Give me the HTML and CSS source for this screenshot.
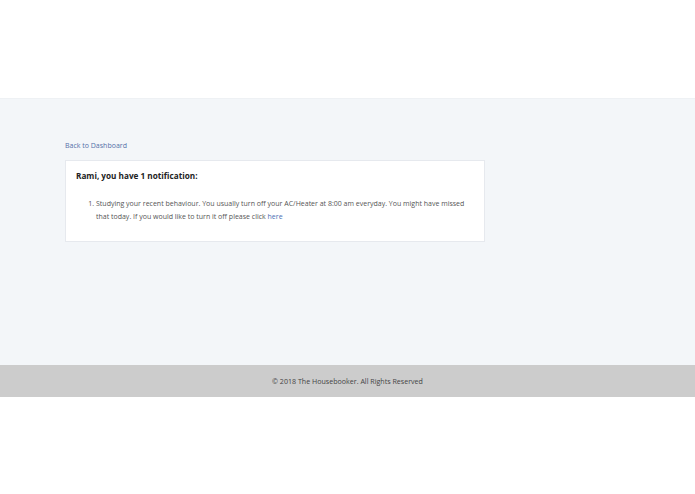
FILE: index.html
```html
<!DOCTYPE html>
<html>
<head>
<meta charset="utf-8">
<link rel="stylesheet" href="styles.css">
</head>
<body>
<header class="top"></header>
<main class="main">
  <a class="back" href="#">Back to Dashboard</a>
  <section class="card">
    <h2 class="title">Rami, you have 1 notification:</h2>
    <ol class="list">
      <li>Studying your recent behaviour. You usually turn off your AC/Heater at 8:00 am everyday. You might have missed that today. If you would like to turn it off please click <a href="#">here</a></li>
    </ol>
  </section>
</main>
<footer class="footer">© 2018 The Housebooker. All Rights Reserved</footer>
</body>
</html>
```
FILE: styles.css
```css
html, body { margin: 0; padding: 0; background: #fff; }
body { font-family: "Open Sans", "DejaVu Sans", sans-serif; color: #333; }
.top { height: 98px; background: #fff; }
.main { background: #f3f6f9; height: 267px; padding: 41px 65px 0; box-sizing: border-box; border-top: 1px solid #eef1f4; }
.back { display: block; font-size: 7px; color: #5470a8; text-decoration: none; line-height: 12px; }
.card { margin-top: 8px; width: 420px; box-sizing: border-box; background: #fff; border: 1px solid #e6e9ee; padding: 9px 10px 18px; }
.title { margin: 0; font-size: 8.2px; font-weight: 700; color: #222; line-height: 12px; }
.list { margin: 15px 0 0; padding-left: 20px; font-size: 7px; line-height: 13px; color: #555; }
.list a { color: #4a6fb5; text-decoration: none; }
.footer { height: 32px; background: #cccccc; font-size: 7.1px; color: #444; display: flex; align-items: center; justify-content: center; }
```
